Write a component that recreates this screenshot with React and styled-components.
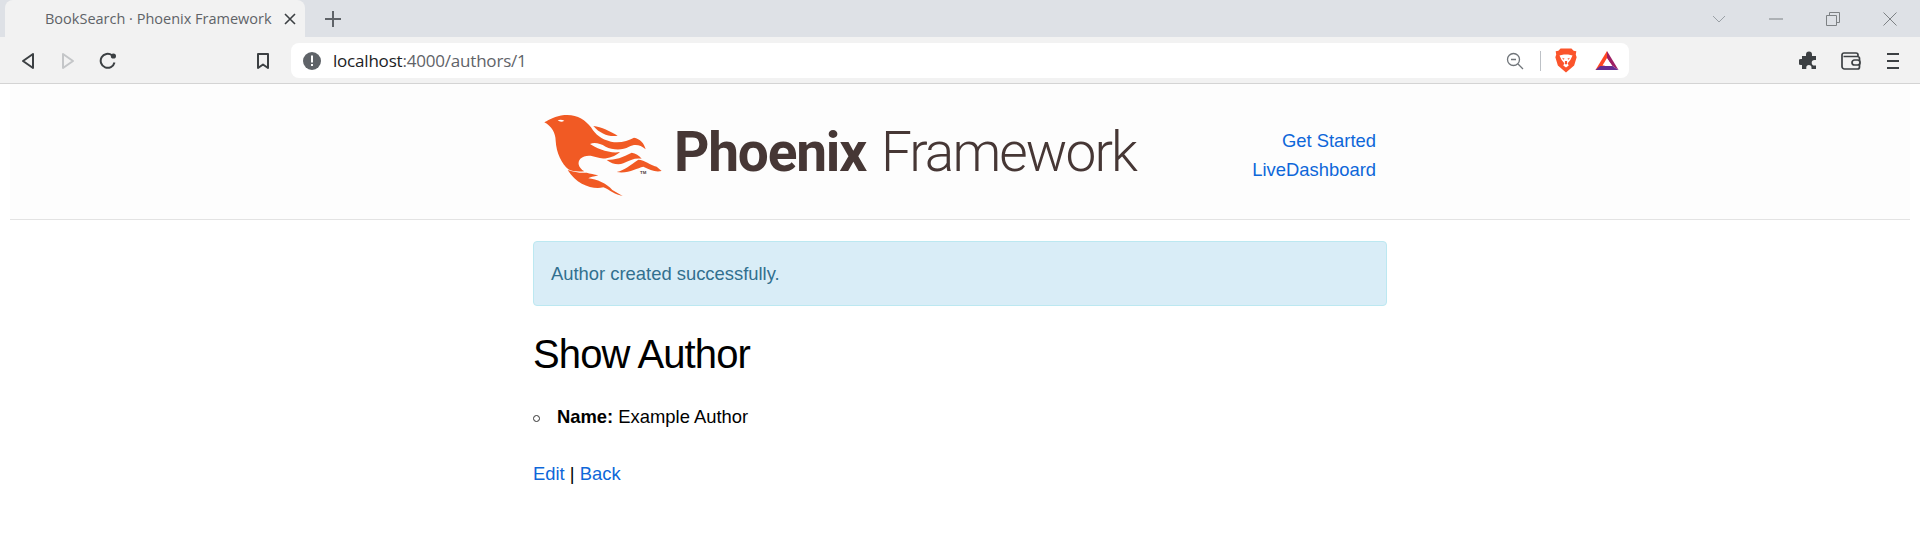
import React from 'react'
import styled, { createGlobalStyle } from 'styled-components'

const GlobalStyle = createGlobalStyle`
  html, body {
    margin: 0;
    padding: 0;
    background: #fff;
    font-family: "Liberation Sans", Arial, sans-serif;
  }
`

const Chrome = styled.div`
  height: 84px;
  display: flex;
  flex-direction: column;
  font-family: "Open Sans", "Noto Sans", sans-serif;
`

const TabStrip = styled.div`
  height: 37px;
  background: #dee1e6;
  display: flex;
  align-items: flex-start;
  padding-left: 5px;
`

const Tab = styled.div`
  width: 300px;
  height: 37px;
  box-sizing: border-box;
  background: #f2f2f2;
  border-radius: 8px 8px 0 0;
  padding-left: 40px;
  display: flex;
  align-items: center;
  color: #5f6368;
  font-size: 14.5px;
  white-space: nowrap;
`

const TabClose = styled.svg`
  width: 12px;
  height: 12px;
  margin-left: auto;
  margin-right: 9px;
`

const NewTab = styled.svg`
  width: 16px;
  height: 16px;
  margin: 11px 0 0 20px;
`

const WindowControls = styled.div`
  margin-left: auto;
  display: flex;
  padding-right: 2px;
`

const WindowButton = styled.div`
  width: 57px;
  height: 37px;
  display: flex;
  align-items: center;
  justify-content: center;
`

const Toolbar = styled.div`
  height: 47px;
  box-sizing: border-box;
  background: #f2f2f2;
  border-bottom: 1px solid #d4d4d4;
  display: flex;
  align-items: flex-start;
  padding: 6px 6px 0 8px;
`

const ToolButton = styled.div`
  width: ${({ $wide }) => ($wide ? 42 : 40)}px;
  height: 35px;
  flex: none;
  display: flex;
  align-items: center;
  justify-content: center;
  margin-left: ${({ $offset }) => $offset || 0}px;
`

const AddressBar = styled.div`
  width: 1338px;
  height: 35px;
  margin-left: 8px;
  background: #fff;
  border-radius: 8px;
  display: flex;
  align-items: center;
  padding: 0 2px 0 12px;
  box-sizing: border-box;
  flex: none;
`

const Url = styled.div`
  font-size: 17px;
  margin-left: 12px;
  color: #5f6368;
  white-space: nowrap;
  letter-spacing: -0.2px;
`

const Host = styled.span`
  color: #202124;
`

const AddressIcons = styled.div`
  margin-left: auto;
  display: flex;
  align-items: center;
`

const AddressDivider = styled.div`
  width: 1px;
  height: 20px;
  background: #bdc1c6;
  margin: 0 14px 0 16px;
`

const ToolbarEnd = styled.div`
  margin-left: auto;
  display: flex;
`

const Header = styled.header`
  height: 136px;
  box-sizing: border-box;
  margin: 0 10px;
  background: #fdfdfd;
  border-bottom: 1px solid #e3e3e3;
`

const HeaderInner = styled.div`
  width: 854px;
  margin: 0 auto;
  display: flex;
  justify-content: space-between;
  padding: 26px 11px 0 2px;
  box-sizing: border-box;
`

const Logo = styled.a`
  display: flex;
  align-items: flex-start;
  text-decoration: none;
  color: #463735;
`

const Wordmark = styled.div`
  font-family: Roboto, sans-serif;
  font-size: 55px;
  line-height: 64px;
  margin: 10px 0 0 4px;
  white-space: nowrap;
`

const WordBold = styled.span`
  font-weight: 700;
  letter-spacing: -1.2px;
`

const WordLight = styled.span`
  font-weight: 300;
  margin-left: 15px;
  letter-spacing: -1.9px;
`

const Nav = styled.nav`
  display: flex;
  flex-direction: column;
  align-items: flex-end;
  gap: 8px;
  padding-top: 20px;
`

const TextLink = styled.a`
  color: #0e67d9;
  font-size: 18.4px;
  line-height: 21px;
  text-decoration: none;
`

const Main = styled.main`
  width: 854px;
  margin: 21px auto 0;
  font-size: 18.4px;
  color: #000;
`

const Alert = styled.p`
  margin: 0;
  height: 65px;
  box-sizing: border-box;
  background: #d9edf7;
  border: 1px solid #bce8f1;
  border-radius: 4px;
  color: #31708f;
  padding: 0 17px;
  display: flex;
  align-items: center;
`

const Title = styled.h1`
  margin: 24px 0 0;
  font-size: 40px;
  line-height: 48px;
  font-weight: 400;
  letter-spacing: -0.9px;
`

const Details = styled.ul`
  list-style: none;
  margin: 28px 0 0;
  padding: 0 0 0 24px;
  line-height: 21px;
`

const DetailItem = styled.li`
  position: relative;

  &::before {
    content: "";
    position: absolute;
    left: -24px;
    top: 9px;
    width: 5px;
    height: 5px;
    border: 1px solid #333;
    border-radius: 50%;
  }
`

const Actions = styled.div`
  margin-top: 36px;
  line-height: 21px;
`

const BackIcon = () => (
  <svg width="14" height="18" viewBox="0 0 14 18">
    <path d="M12 2 L2 9 L12 16 Z" fill="none" stroke="#3c4043" strokeWidth="2" strokeLinejoin="round" />
  </svg>
)

const ForwardIcon = () => (
  <svg width="14" height="18" viewBox="0 0 14 18">
    <path d="M2 2 L12 9 L2 16 Z" fill="none" stroke="#c4c6c8" strokeWidth="2" strokeLinejoin="round" />
  </svg>
)

const ReloadIcon = () => (
  <svg width="18" height="18" viewBox="0 0 18 18">
    <path d="M15.5 10.5 A7 7 0 1 1 13 3.3" fill="none" stroke="#3c4043" strokeWidth="2" />
    <circle cx="14.4" cy="4" r="2.6" fill="#3c4043" />
  </svg>
)

const BookmarkIcon = () => (
  <svg width="14" height="18" viewBox="0 0 14 18">
    <path d="M2 2 H12 V16 L7 12.5 L2 16 Z" fill="none" stroke="#3c4043" strokeWidth="2" strokeLinejoin="round" />
  </svg>
)

const InsecureIcon = () => (
  <svg width="18" height="18" viewBox="0 0 18 18">
    <circle cx="9" cy="9" r="9" fill="#5f6368" />
    <rect x="8" y="3.5" width="2" height="7" fill="#fff" />
    <rect x="8" y="12" width="2" height="2" fill="#fff" />
  </svg>
)

const ZoomOutIcon = () => (
  <svg width="18" height="18" viewBox="0 0 18 18">
    <circle cx="7.5" cy="7.5" r="6" fill="none" stroke="#70757a" strokeWidth="1.3" />
    <path d="M5 7.5 H10 M12 12 L17 17" stroke="#70757a" strokeWidth="1.3" />
  </svg>
)

const BraveIcon = () => (
  <svg width="22" height="25" viewBox="0 0 20 23">
    <path d="M5 0.5 H15 L17 2.5 L19.5 3 L19 6 L19.8 8.5 L17.5 16 L10 22.5 L2.5 16 L0.2 8.5 L1 6 L0.5 3 L3 2.5 Z" fill="#fb542b" />
    <path d="M4 7 L8 6 H12 L16 7 L14 11 L11.5 14 L12.5 16 L10 18 L7.5 16 L8.5 14 L6 11 Z" fill="#fff" />
    <path d="M6.5 9 L8.8 9.8 L7.5 10.8 Z M13.5 9 L11.2 9.8 L12.5 10.8 Z M9 12 V15 H11 V12 Z" fill="#fb542b" />
  </svg>
)

const BatIcon = () => (
  <svg width="24" height="21" viewBox="0 0 24 21">
    <path d="M12 1 L0.5 20 H8 L12 8.5 Z" fill="#ff4724" />
    <path d="M12 1 L23.5 20 L17.5 16 L12 8.5 Z" fill="#9e1f63" />
    <path d="M0.5 20 L5 16 H17.5 L23.5 20 Z" fill="#662d91" />
    <path d="M12 8 L7.5 15.5 H16.5 Z" fill="#fff" />
  </svg>
)

const PuzzleIcon = () => (
  <svg width="20" height="20" viewBox="0 0 20 20">
    <path d="M7 3.5 A3 3 0 0 1 13 3.5 V5 H17 V9 H15.5 A2.8 2.8 0 0 0 15.5 14.6 H17 V18 H12.5 V16.5 A2.6 2.6 0 0 0 7.3 16.5 V18 H3 V14 H1.8 A3 3 0 0 1 1.8 8 H3 V5 H7 Z" fill="#3c4043" />
  </svg>
)

const WalletIcon = () => (
  <svg width="20" height="18" viewBox="0 0 20 18">
    <path d="M3 1 H15 A2 2 0 0 1 17 3 V4.5 M1 3 A2 2 0 0 1 3 1 M1 3 V14.5 A2.5 2.5 0 0 0 3.5 17 H16.5 A2 2 0 0 0 18.5 15 V6.5 A2 2 0 0 0 16.5 4.5 H2.5" fill="none" stroke="#3c4043" strokeWidth="1.7" />
    <rect x="11" y="8" width="8" height="5" rx="2.5" fill="#f2f2f2" stroke="#3c4043" strokeWidth="1.7" />
  </svg>
)

const MenuIcon = () => (
  <svg width="14" height="18" viewBox="0 0 14 18">
    <path d="M1 2 H13 M1 9 H13 M1 16 H13" stroke="#3c4043" strokeWidth="2" />
  </svg>
)

const PhoenixBird = () => (
  <svg width="135" height="90" viewBox="0 0 405 270" style={{ flex: 'none' }}>
    <g fill="#f15a24">
      <path d="M28 37 C45 28 60 18 88 15 C125 12 150 28 168 52 C182 74 198 88 228 95 C255 100 278 93 297 83 C315 86 328 100 332 118 C316 103 298 102 282 110 C262 122 232 120 212 110 C195 100 178 96 165 102 C182 114 225 132 255 126 C235 144 205 150 185 142 C165 134 148 136 136 146 C126 158 130 172 148 184 C128 186 110 184 100 178 C80 160 64 130 62 92 C62 70 50 48 28 37 Z" />
      <path d="M175 48 C200 50 225 64 248 77 C225 82 195 72 175 48 Z" />
      <path d="M215 150 C240 150 265 142 290 128 C302 130 312 136 320 146 C300 143 285 150 265 160 C250 166 230 162 215 150 Z" />
      <path d="M245 186 C270 180 285 165 310 149 C330 150 345 165 365 170 L380 183 C360 187 345 180 325 170 C305 174 280 192 245 186 Z" />
      <path d="M98 180 C120 186 135 190 155 188 C165 192 178 192 190 196 C175 200 165 202 160 205 C185 208 215 220 232 240 L263 258 C240 255 225 240 205 232 C175 240 125 225 98 180 Z" />
    </g>
    <path d="M68 31 C74 28 82 29 88 32 C82 36 74 36 68 31 Z" fill="#fff" />
    <text x="315" y="191" fontFamily="Liberation Sans, sans-serif" fontSize="13" fontWeight="700" fill="#4a3836">TM</text>
  </svg>
)

export default function App() {
  return (
    <>
      <GlobalStyle />
      <Chrome>
        <TabStrip>
          <Tab>
            BookSearch · Phoenix Framework
            <TabClose viewBox="0 0 12 12">
              <path d="M1 1 L11 11 M11 1 L1 11" stroke="#3c4043" strokeWidth="1.6" />
            </TabClose>
          </Tab>
          <NewTab viewBox="0 0 16 16">
            <path d="M8 0 V16 M0 8 H16" stroke="#5f6368" strokeWidth="2" />
          </NewTab>
          <WindowControls>
            <WindowButton>
              <svg width="14" height="8" viewBox="0 0 14 8">
                <path d="M1 1 L7 7 L13 1" fill="none" stroke="#9aa0a6" strokeWidth="1" />
              </svg>
            </WindowButton>
            <WindowButton>
              <svg width="14" height="2" viewBox="0 0 14 2">
                <path d="M0 1 H14" stroke="#7d8184" strokeWidth="1" />
              </svg>
            </WindowButton>
            <WindowButton>
              <svg width="14" height="14" viewBox="0 0 14 14">
                <path d="M0.5 3.5 H10.5 V13.5 H0.5 Z M3.5 3.5 V0.5 H13.5 V10.5 H10.5" fill="none" stroke="#7d8184" strokeWidth="1" />
              </svg>
            </WindowButton>
            <WindowButton>
              <svg width="14" height="14" viewBox="0 0 14 14">
                <path d="M0.5 0.5 L13.5 13.5 M13.5 0.5 L0.5 13.5" stroke="#7d8184" strokeWidth="1" />
              </svg>
            </WindowButton>
          </WindowControls>
        </TabStrip>
        <Toolbar>
          <ToolButton><BackIcon /></ToolButton>
          <ToolButton><ForwardIcon /></ToolButton>
          <ToolButton><ReloadIcon /></ToolButton>
          <ToolButton $offset={115}><BookmarkIcon /></ToolButton>
          <AddressBar>
            <InsecureIcon />
            <Url><Host>localhost</Host>:4000/authors/1</Url>
            <AddressIcons>
              <ZoomOutIcon />
              <AddressDivider />
              <BraveIcon />
              <ToolButton $offset={10}><BatIcon /></ToolButton>
            </AddressIcons>
          </AddressBar>
          <ToolbarEnd>
            <ToolButton $wide><PuzzleIcon /></ToolButton>
            <ToolButton $wide><WalletIcon /></ToolButton>
            <ToolButton $wide><MenuIcon /></ToolButton>
          </ToolbarEnd>
        </Toolbar>
      </Chrome>
      <Header>
        <HeaderInner>
          <Logo href="#">
            <PhoenixBird />
            <Wordmark><WordBold>Phoenix</WordBold><WordLight>Framework</WordLight></Wordmark>
          </Logo>
          <Nav>
            <TextLink href="#">Get Started</TextLink>
            <TextLink href="#">LiveDashboard</TextLink>
          </Nav>
        </HeaderInner>
      </Header>
      <Main>
        <Alert>Author created successfully.</Alert>
        <Title>Show Author</Title>
        <Details>
          <DetailItem><strong>Name:</strong> Example Author</DetailItem>
        </Details>
        <Actions>
          <TextLink href="#">Edit</TextLink> | <TextLink href="#">Back</TextLink>
        </Actions>
      </Main>
    </>
  )
}
